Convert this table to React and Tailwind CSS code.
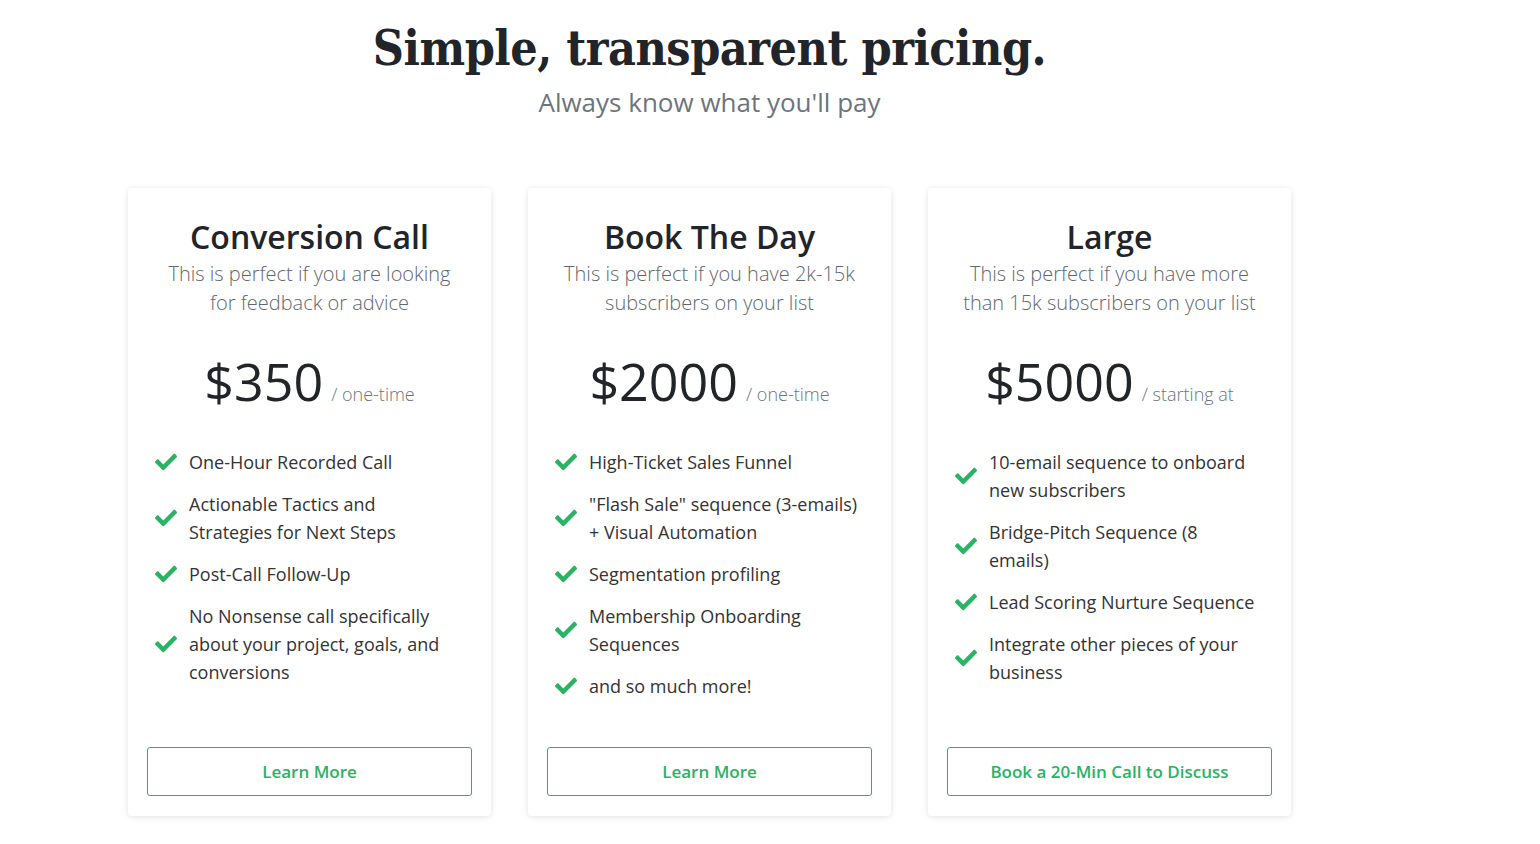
import React from "react";

const Check = () => (
  <svg viewBox="0 0 512 512" className="w-[22px] h-[22px] shrink-0 fill-[#28b463]">
    <path d="M173.898 439.404l-166.4-166.4c-9.997-9.997-9.997-26.206 0-36.204l36.203-36.204c9.997-9.998 26.207-9.998 36.204 0L192 312.69 432.095 72.596c9.997-9.997 26.207-9.997 36.204 0l36.203 36.204c9.997 9.997 9.997 26.206 0 36.204l-294.4 294.401c-9.998 9.997-26.207 9.997-36.204-.001z" />
  </svg>
);

const plans = [
  {
    title: "Conversion Call",
    desc: ["This is perfect if you are looking", "for feedback or advice"],
    price: "$350",
    unit: "/ one-time",
    items: [
      ["One-Hour Recorded Call"],
      ["Actionable Tactics and", "Strategies for Next Steps"],
      ["Post-Call Follow-Up"],
      ["No Nonsense call specifically", "about your project, goals, and", "conversions"],
    ],
    cta: "Learn More",
  },
  {
    title: "Book The Day",
    desc: ["This is perfect if you have 2k-15k", "subscribers on your list"],
    price: "$2000",
    unit: "/ one-time",
    items: [
      ["High-Ticket Sales Funnel"],
      ['"Flash Sale" sequence (3-emails)', "+ Visual Automation"],
      ["Segmentation profiling"],
      ["Membership Onboarding", "Sequences"],
      ["and so much more!"],
    ],
    cta: "Learn More",
  },
  {
    title: "Large",
    desc: ["This is perfect if you have more", "than 15k subscribers on your list"],
    price: "$5000",
    unit: "/ starting at",
    items: [
      ["10-email sequence to onboard", "new subscribers"],
      ["Bridge-Pitch Sequence (8", "emails)"],
      ["Lead Scoring Nurture Sequence"],
      ["Integrate other pieces of your", "business"],
    ],
    cta: "Book a 20-Min Call to Discuss",
  },
];

export default function App() {
  return (
    <div className="min-h-screen bg-white font-['Open_Sans',sans-serif] text-[#212529]">
      <div className="w-[1163px] ml-[128px]">
        <div className="flex flex-col items-center pt-[16px]">
          <h1 className="font-['DejaVu_Serif_Condensed','DejaVu_Serif',serif] font-bold text-[48px] leading-[64px] text-[#212529] tracking-[-0.5px]">
            Simple, transparent pricing.
          </h1>
          <p className="mt-[5px] text-[26px] leading-[34px] font-normal text-[#6c757d]">
            Always know what you'll pay
          </p>
        </div>
        <div className="grid grid-cols-[363px_363px_363px] gap-x-[37px] mt-[69px]">
          {plans.map((p) => (
            <div
              key={p.title}
              className="flex flex-col rounded-[4px] bg-white shadow-[0_1px_6px_rgba(0,0,0,0.12)] pt-[30px] pb-[20px] px-[19px]"
            >
              <h2 className="text-center text-[32px] leading-[38px] font-[550] text-[#212529]">
                {p.title}
              </h2>
              <p className="mt-[3px] text-center text-[20px] leading-[29px] font-light text-[#5f676e]">
                {p.desc[0]}
                <br />
                {p.desc[1]}
              </p>
              <div className="mt-[33px] flex items-baseline justify-center">
                <span className="text-[52px] leading-[62px] font-normal text-[#212529]">{p.price}</span>
                <span className="ml-[8px] text-[18px] font-light text-[#6c757d]">{p.unit}</span>
              </div>
              <ul className="mt-[36px] pl-[8px] flex flex-col gap-[14px] mb-[47px]">
                {p.items.map((lines, i) => (
                  <li key={i} className="flex items-center gap-[12px]">
                    <Check />
                    <span className="text-[18px] leading-[28px] text-[#333] whitespace-nowrap">
                      {lines.map((l, j) => (
                        <React.Fragment key={j}>
                          {j > 0 && <br />}
                          {l}
                        </React.Fragment>
                      ))}
                    </span>
                  </li>
                ))}
              </ul>
              <button className="mt-auto h-[49px] w-full rounded-[3px] border border-[#28b463] bg-white text-[17px] font-semibold text-[#28b463]">
                {p.cta}
              </button>
            </div>
          ))}
        </div>
      </div>
    </div>
  );
}
